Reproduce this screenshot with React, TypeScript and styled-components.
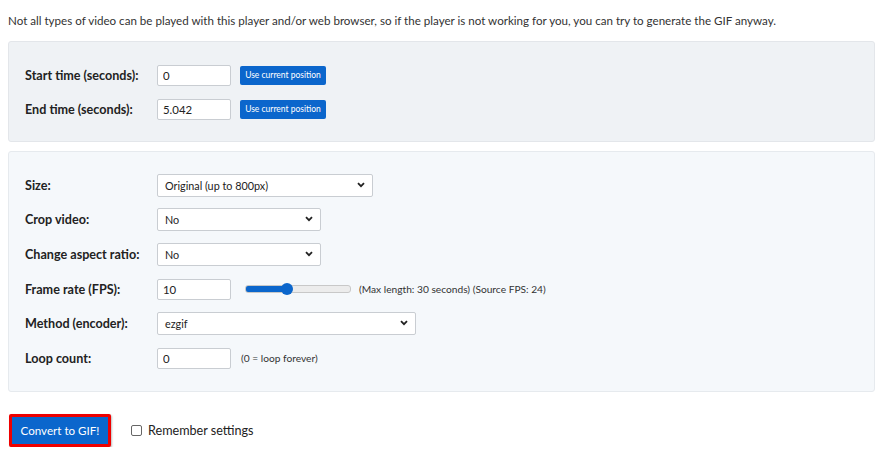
import React from 'react'
import styled, { createGlobalStyle } from 'styled-components'

const GlobalStyle = createGlobalStyle`
	body {
		margin: 0;
		background: #fff;
		font-family: Lato, 'Noto Sans', sans-serif;
		color: #212529;
	}
`

const Page = styled.div`
	padding: 12px 15px 0 8px;
`

const Intro = styled.p`
	margin: 0 0 11px;
	font-size: 11.6px;
	line-height: 18px;
	color: #333;
`

const Panel = styled.div<{ $tone: 'dark' | 'light' }>`
	background: ${(p) => (p.$tone === 'dark' ? '#eff2f5' : '#f5f8fb')};
	border: 1px solid ${(p) => (p.$tone === 'dark' ? '#e3e6ea' : '#e6eaee')};
	border-radius: 3px;
	padding: 16px 16px 15px;
	margin-bottom: 9px;
`

const Row = styled.div<{ $h: number }>`
	display: flex;
	align-items: center;
	height: ${(p) => p.$h}px;
`

const Label = styled.label`
	width: 132px;
	flex-shrink: 0;
	font-size: 12.6px;
	font-weight: 700;
	color: #222;
`

const TextInput = styled.input`
	box-sizing: border-box;
	width: 74px;
	height: 21px;
	border: 1px solid #c9cdd2;
	border-radius: 2px;
	padding: 0 5px;
	font: 11.4px Lato, sans-serif;
	color: #222;
	background: #fff;
	outline: none;
`

const SmallButton = styled.button`
	margin-left: 9px;
	height: 19px;
	width: 86px;
	padding: 0;
	border: none;
	border-radius: 2px;
	background: #0b66cc;
	color: #fff;
	font: 8.5px Lato, sans-serif;
`

const SelectBox = styled.div<{ $w: number }>`
	box-sizing: border-box;
	position: relative;
	width: ${(p) => p.$w}px;
	height: 23px;
	border: 1px solid #c9cdd2;
	border-radius: 2px;
	background: #fff;
	display: flex;
	align-items: center;
	padding: 0 0 0 7px;
	font-size: 10.8px;
	color: #222;
`

const Chevron = styled.svg`
	position: absolute;
	right: 7px;
	top: 7px;
`

const Hint = styled.span<{ $gap: number }>`
	margin-left: ${(p) => p.$gap}px;
	font-size: 10.2px;
	color: #333;
`

const Range = styled.input`
	-webkit-appearance: none;
	appearance: none;
	margin: 0 0 0 14px;
	width: 104px;
	height: 6px;
	border-radius: 3px;
	border: 1px solid #c8c8c8;
	background: linear-gradient(to right, #0b66cc 0%, #0b66cc 40%, #ececec 40%, #ececec 100%);
	outline: none;
	&::-webkit-slider-thumb {
		-webkit-appearance: none;
		width: 12px;
		height: 12px;
		border-radius: 50%;
		background: #0b66cc;
		border: none;
	}
`

const Footer = styled.div`
	display: flex;
	align-items: center;
	padding: 13px 0 0 1px;
`

const ConvertButton = styled.button`
	box-sizing: border-box;
	width: 102px;
	height: 33px;
	border: 3px solid #ee0000;
	border-radius: 2px;
	background: #0b66cc;
	color: #fff;
	font: 11.6px Lato, sans-serif;
	padding: 0;
	box-shadow: 1px 1px 2px rgba(0, 0, 0, 0.25);
`

const CheckLabel = styled.label`
	display: flex;
	align-items: center;
	margin-left: 20px;
	font-size: 12.6px;
	color: #222;
`

const Check = styled.span`
	box-sizing: border-box;
	width: 11px;
	height: 11px;
	border: 1px solid #666;
	border-radius: 2px;
	margin-right: 6px;
	background: #fff;
`

const Select = ({ w, value }: { w: number; value: string }) => (
	<SelectBox $w={w}>
		{value}
		<Chevron width="8" height="6" viewBox="0 0 8 6">
			<path d="M1 1.2 L4 4.2 L7 1.2" fill="none" stroke="#222" strokeWidth="1.8" />
		</Chevron>
	</SelectBox>
)

export default function App() {
	return (
		<Page>
			<GlobalStyle />
			<Intro>
				Not all types of video can be played with this player and/or web browser, so if the
				player is not working for you, you can try to generate the GIF anyway.
			</Intro>
			<Panel $tone="dark">
				<Row $h={34}>
					<Label>Start time (seconds):</Label>
					<TextInput defaultValue="0" />
					<SmallButton>Use current position</SmallButton>
				</Row>
				<Row $h={34}>
					<Label>End time (seconds):</Label>
					<TextInput defaultValue="5.042" />
					<SmallButton>Use current position</SmallButton>
				</Row>
			</Panel>
			<Panel $tone="light">
				<Row $h={34.6}>
					<Label>Size:</Label>
					<Select w={216} value="Original (up to 800px)" />
				</Row>
				<Row $h={34.6}>
					<Label>Crop video:</Label>
					<Select w={164} value="No" />
				</Row>
				<Row $h={34.6}>
					<Label>Change aspect ratio:</Label>
					<Select w={164} value="No" />
				</Row>
				<Row $h={34.6}>
					<Label>Frame rate (FPS):</Label>
					<TextInput defaultValue="10" />
					<Range type="range" min={1} max={25} defaultValue={10} />
					<Hint $gap={8}>(Max length: 30 seconds) (Source FPS: 24)</Hint>
				</Row>
				<Row $h={34.6}>
					<Label>Method (encoder):</Label>
					<Select w={259} value="ezgif" />
				</Row>
				<Row $h={34.6}>
					<Label>Loop count:</Label>
					<TextInput defaultValue="0" />
					<Hint $gap={10}>(0 = loop forever)</Hint>
				</Row>
			</Panel>
			<Footer>
				<ConvertButton>Convert to GIF!</ConvertButton>
				<CheckLabel>
					<Check />
					Remember settings
				</CheckLabel>
			</Footer>
		</Page>
	)
}
